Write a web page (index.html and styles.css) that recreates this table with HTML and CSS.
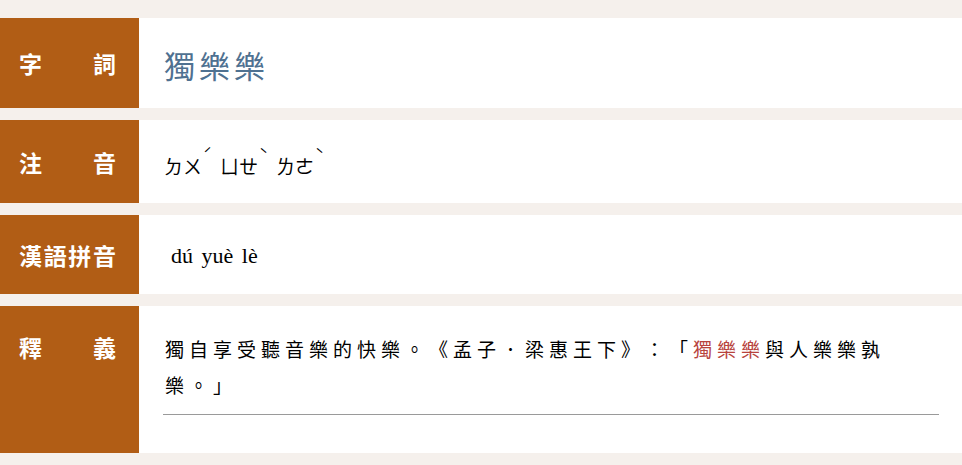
FILE: index.html
```html
<!DOCTYPE html>
<html lang="zh-Hant">
<head>
<meta charset="utf-8">
<link rel="stylesheet" href="styles.css">
</head>
<body>
<div class="entry">
  <div class="row row-word">
    <div class="label"><span class="label-text">字詞</span></div>
    <div class="content"><span class="word">獨樂樂</span></div>
  </div>
  <div class="row row-zhuyin">
    <div class="label"><span class="label-text">注音</span></div>
    <div class="content zhuyin">
      <span class="syl">ㄉㄨ<span class="tone">ˊ</span></span>
      <span class="syl">ㄩㄝ<span class="tone">ˋ</span></span>
      <span class="syl">ㄌㄜ<span class="tone">ˋ</span></span>
    </div>
  </div>
  <div class="row row-pinyin">
    <div class="label"><span class="label-text">漢語拼音</span></div>
    <div class="content"><span class="pinyin">dú yuè lè</span></div>
  </div>
  <div class="row row-def">
    <div class="label label-top"><span class="label-text">釋義</span></div>
    <div class="content def">
      <p class="def-text">獨自享受聽音樂的快樂。《孟子．梁惠王下》：「<span class="hl">獨樂樂</span>與人樂樂孰樂。」</p>
      <hr class="rule">
    </div>
  </div>
</div>
</body>
</html>
```
FILE: styles.css
```css
html, body {
  margin: 0;
  padding: 0;
  background: #f5f0ec;
}
body {
  font-family: "Noto Sans CJK TC", "Noto Sans", sans-serif;
  color: #000;
  text-spacing-trim: space-all;
}
.entry {
  display: flex;
  flex-direction: column;
  gap: 12px;
  padding-top: 18px;
}
.row {
  display: flex;
  background: #fff;
}
.label {
  width: 139px;
  flex: none;
  background: #b15d15;
  color: #fff;
  box-sizing: border-box;
  padding: 0 23px 0 19px;
  display: flex;
  align-items: center;
}
.label-top {
  align-items: flex-start;
  padding-top: 27px;
}
.label-text {
  display: block;
  width: 100%;
  font-size: 23px;
  font-weight: 700;
  line-height: 28px;
  text-align: justify;
  text-align-last: justify;
}
.content {
  flex: 1;
  padding-left: 25px;
  display: flex;
  align-items: center;
}
.row-word { height: 90px; }
.row-zhuyin { height: 83px; }
.row-pinyin { height: 79px; }
.word {
  font-size: 31px;
  color: #4f7191;
  letter-spacing: 4px;
  line-height: 40px;
  padding-top: 4px;
}
.zhuyin {
  gap: 6px;
  padding-top: 8px;
}
.syl {
  font-size: 19px;
  line-height: 24px;
  position: relative;
  padding-right: 12px;
}
.tone {
  position: absolute;
  right: 2px;
  top: -12px;
  font-size: 15px;
}
.pinyin {
  font-family: "Liberation Serif", serif;
  font-size: 22px;
  word-spacing: 3px;
  padding-left: 7px;
  padding-top: 2px;
}
.def {
  flex-direction: column;
  align-items: stretch;
  padding-left: 24px;
  padding-right: 23px;
  padding-top: 25px;
  padding-bottom: 38px;
}
.def-text {
  margin: 0;
  font-size: 19px;
  line-height: 36px;
  letter-spacing: 5px;
  padding-left: 2px;
  padding-right: 50px;
}
.hl { color: #b8433d; }
.rule {
  margin: 11px 0 0;
  border: 0;
  height: 1px;
  background: #9a9a9a;
}
```
